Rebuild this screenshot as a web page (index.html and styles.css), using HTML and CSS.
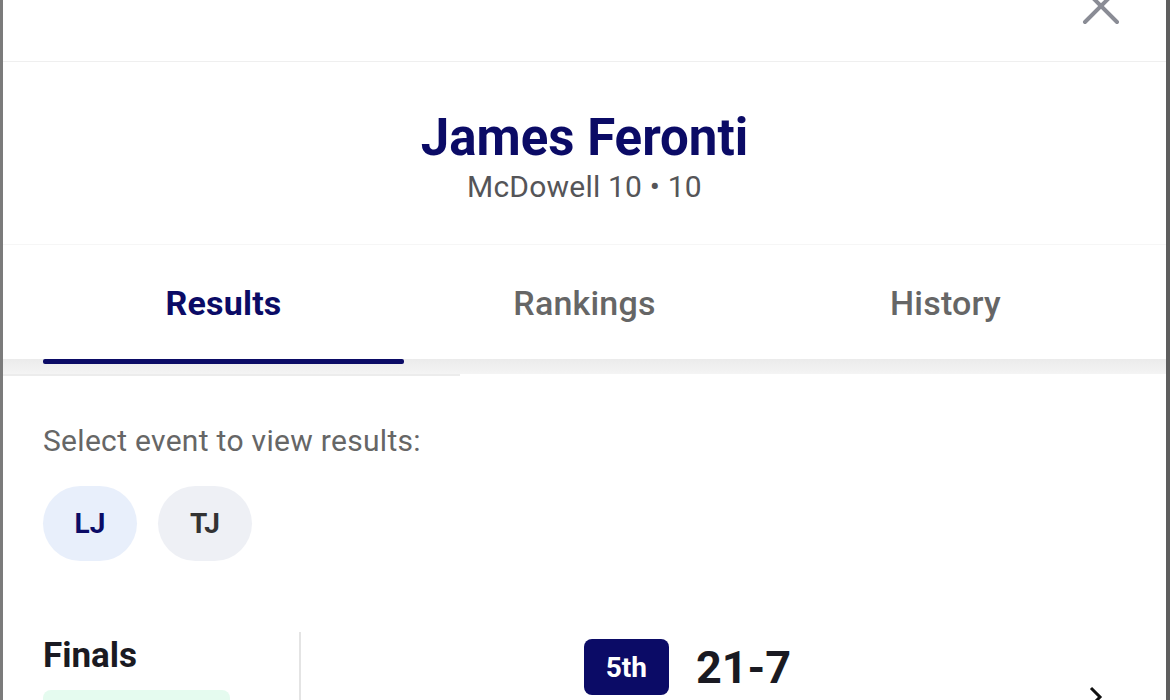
FILE: index.html
```html
<!DOCTYPE html>
<html lang="en">
<head>
    <meta charset="UTF-8">
    <meta name="viewport" content="width=device-width, initial-scale=1.0">
    <title>Athlete Profile</title>
    <link rel="stylesheet" href="styles.css">
</head>
<body>

    <div class="sheet">
        <div class="topbar">
            <button class="close-btn" aria-label="Close">
                <svg width="38" height="38" viewBox="0 0 38 38">
                    <path d="M3 3 L35 35 M35 3 L3 35" stroke="#8a8c95" stroke-width="4" stroke-linecap="round" fill="none"/>
                </svg>
            </button>
        </div>

        <div class="profile">
            <h1 class="athlete-name">James Feronti</h1>
            <p class="athlete-meta">McDowell 10 &bull; 10</p>
        </div>

        <div class="tab-strip">
            <div class="tabs">
                <div class="tab active">Results</div>
                <div class="tab">Rankings</div>
                <div class="tab">History</div>
            </div>
            <div class="tab-track">
                <div class="tab-ink"></div>
            </div>
            <div class="tab-scroll"></div>
        </div>

        <div class="content">
            <p class="hint">Select event to view results:</p>
            <div class="chips">
                <button class="chip selected">LJ</button>
                <button class="chip">TJ</button>
            </div>

            <div class="result-row">
                <div class="round">
                    <h2>Finals</h2>
                    <div class="round-tag"></div>
                </div>
                <div class="result-main">
                    <div class="place">
                        <span class="place-badge">5th</span>
                        <span class="mark">21-7</span>
                    </div>
                </div>
                <div class="result-go">
                    <svg width="20" height="28" viewBox="0 0 20 28">
                        <path d="M5 4 L14 13 L5 22" stroke="#111" stroke-width="3" fill="none"/>
                    </svg>
                </div>
            </div>
        </div>
    </div>

</body>
</html>
```

FILE: styles.css
```css
html, body {
    margin: 0;
    padding: 0;
    height: 100%;
    overflow: hidden;
    background: #ffffff;
}

body {
    font-family: Roboto, "Noto Sans", Arial, sans-serif;
}

.sheet {
    height: 100%;
    background: #ffffff;
    border-left: 3px solid #7b7b7b;
    border-right: 4px solid #5e5e5e;
    display: flex;
    flex-direction: column;
}

/* header with close button */
.topbar {
    height: 61px;
    flex-shrink: 0;
    border-bottom: 1px solid #efefef;
    display: flex;
    justify-content: flex-end;
    align-items: flex-start;
    padding-right: 46px;
    overflow: hidden;
}

.close-btn {
    background: none;
    border: none;
    padding: 0;
    margin-top: -13px;
    cursor: pointer;
}

.profile {
    height: 183px;
    flex-shrink: 0;
    border-bottom: 1px solid #f6f6f6;
    text-align: center;
    box-sizing: border-box;
    padding-top: 47px;
}

.athlete-name {
    margin: 0;
    font-size: 51px;
    line-height: 58px;
    font-weight: 700;
    color: #0b0b66;
}

.athlete-meta {
    margin: 1px 0 0;
    font-size: 30px;
    line-height: 38px;
    letter-spacing: 0.2px;
    color: #555558;
}

/* tabs */
.tab-strip {
    flex-shrink: 0;
}

.tabs {
    display: flex;
    padding: 0 40px;
    height: 114px;
}

.tab {
    flex: 1;
    display: flex;
    align-items: center;
    justify-content: center;
    padding-top: 2px;
    font-size: 34px;
    font-weight: 500;
    letter-spacing: 0.2px;
    color: #666666;
}

.tab.active {
    font-weight: 700;
    color: #0b0b66;
}

.tab-track {
    height: 15px;
    background: linear-gradient(#ebebeb, #f4f4f4);
    padding-left: 40px;
}

.tab-ink {
    width: 361px;
    height: 5px;
    border-radius: 2px;
    background: #0b0b66;
}

.tab-scroll {
    width: 457px;
    height: 2px;
    background: #ececec;
}

/* results body */
.content {
    padding: 0 40px;
}

.hint {
    margin: 47px 0 0;
    font-size: 30px;
    line-height: 36px;
    letter-spacing: 0.3px;
    color: #666666;
}

.chips {
    display: flex;
    gap: 21px;
    margin-top: 27px;
}

.chip {
    width: 94px;
    height: 75px;
    border: none;
    border-radius: 38px;
    background: #eef0f5;
    font-family: inherit;
    font-size: 28px;
    font-weight: 700;
    color: #333333;
}

.chip.selected {
    background: #e8effb;
    color: #0b0b66;
}

.result-row {
    display: flex;
    margin-top: 71px;
    margin-right: -40px;
}

.round {
    width: 256px;
    border-right: 2px solid #e4e4e4;
}

.round h2 {
    margin: 4px 0 0;
    font-size: 35px;
    line-height: 40px;
    font-weight: 700;
    color: #1a1a22;
}

.round-tag {
    width: 187px;
    height: 40px;
    margin-top: 14px;
    border-radius: 8px;
    background: #e5fbef;
}

.result-main {
    flex: 1;
    display: flex;
    justify-content: center;
    padding-left: 5px;
}

.place {
    display: flex;
    align-items: center;
    gap: 27px;
    margin-top: 7px;
    height: 56px;
}

.place-badge {
    width: 85px;
    height: 56px;
    border-radius: 8px;
    background: #0b0b66;
    color: #ffffff;
    font-size: 28px;
    font-weight: 700;
    display: flex;
    align-items: center;
    justify-content: center;
}

.mark {
    font-size: 45px;
    font-weight: 700;
    color: #1a1a22;
}

.result-go {
    width: 97px;
    box-sizing: border-box;
    padding: 52px 0 0 17px;
}
```
